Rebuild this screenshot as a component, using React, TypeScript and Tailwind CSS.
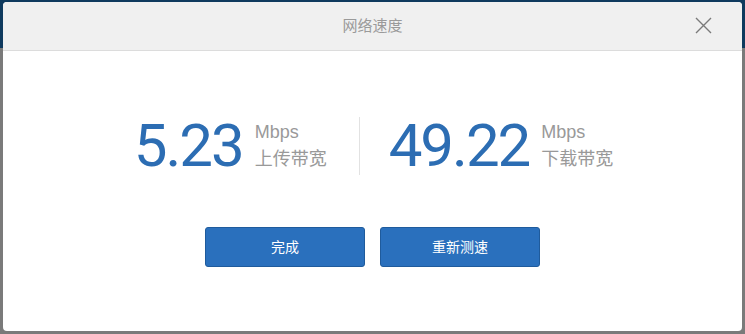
import React from "react";

const cjk = { fontFamily: '"Liberation Sans", "Noto Sans CJK SC", sans-serif' };

function Stat({ value, label }: { value: string; label: string }) {
  return (
    <div className="flex items-center">
      <div
        className="text-[60px] leading-none text-[#2c6db3] tracking-[-2px]"
        style={{ fontFamily: 'Roboto, "Liberation Sans", sans-serif' }}
      >
        {value}
      </div>
      <div className="ml-[12px] flex flex-col text-[#999999] text-[18px] leading-[27px] mt-[-1px]" style={cjk}>
        <span>Mbps</span>
        <span>{label}</span>
      </div>
    </div>
  );
}

export default function App() {
  return (
    <div className="relative w-[745px] h-[334px] overflow-hidden bg-[#7a7a7a]">
      <div className="h-[48px] bg-[#0f3a5e]" />
      <div className="absolute left-[3px] top-[2px] w-[739px] h-[329px] bg-white rounded-[4px] overflow-hidden flex flex-col">
        <div className="relative h-[49px] shrink-0 bg-[#f0f0f0] border-b border-[#dcdcdc] flex items-center justify-center">
          <span className="text-[15px] text-[#9a9a9a]" style={cjk}>
            网络速度
          </span>
          <svg
            className="absolute right-[30px] top-[15px]"
            width="17"
            height="17"
            viewBox="0 0 17 17"
            fill="none"
            stroke="#7a7a7a"
            strokeWidth="1.4"
          >
            <path d="M1 1 L16 16 M16 1 L1 16" />
          </svg>
        </div>
        <div className="flex justify-center items-center mt-[65px] ml-[2px]">
          <Stat value="5.23" label="上传带宽" />
          <div className="w-px h-[58px] bg-[#e2e2e2] ml-[32px] mr-[29px]" />
          <Stat value="49.22" label="下载带宽" />
        </div>
        <div className="flex justify-center gap-[15px] mt-[51px]">
          <button
            className="w-[160px] h-[40px] rounded-[3px] bg-[#2a70bd] border border-[#1f5b9c] text-white text-[14px]"
            style={cjk}
          >
            完成
          </button>
          <button
            className="w-[160px] h-[40px] rounded-[3px] bg-[#2a70bd] border border-[#1f5b9c] text-white text-[14px]"
            style={cjk}
          >
            重新测速
          </button>
        </div>
      </div>
    </div>
  );
}
